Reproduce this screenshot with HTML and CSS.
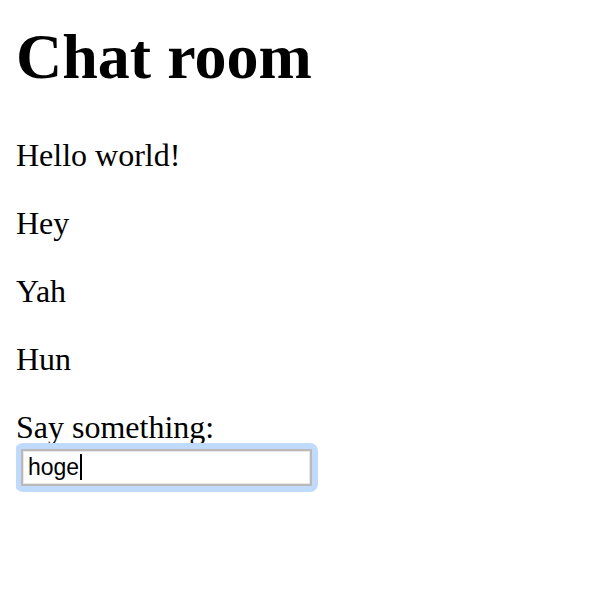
FILE: index.html
```html
<!DOCTYPE html>
<html>
<head>
<meta charset="utf-8">
<link rel="stylesheet" href="styles.css">
</head>
<body class="page">
<h1 class="title">Chat room</h1>
<p class="msg">Hello world!</p>
<p class="msg">Hey</p>
<p class="msg">Yah</p>
<p class="msg">Hun</p>
<div class="form">
  <div class="label">Say something:</div>
  <div class="ring"><div class="field"><span class="value">hoge</span><span class="caret"></span></div></div>
</div>
</body>
</html>
```

FILE: styles.css
```css
html, body { background: #fff; }
.page {
  margin: 20px 16px 16px 16px;
  font-family: "Liberation Serif", "Times New Roman", serif;
  color: #000;
}
.title {
  font-size: 64px;
  font-weight: bold;
  margin: 0 0 43px 0;
  line-height: 74px;
}
.msg {
  font-size: 32px;
  line-height: 37px;
  margin: 0 0 31px 0;
}
.form {
  font-size: 32px;
  line-height: 37px;
}
.label { height: 37px; }
.ring {
  display: inline-block;
  margin: -4px 0 0 -1px;
  padding: 6px;
  background: #bfdafb;
  border-radius: 8px;
}
.field {
  box-sizing: border-box;
  width: 291px;
  height: 37px;
  background: #fff;
  border: 2px solid #b9b9b9;
  box-shadow: inset 0 0 0 1px #e8e8e8;
  display: flex;
  align-items: center;
  padding-left: 5px;
  font-family: "Liberation Sans", Arial, sans-serif;
  font-size: 23px;
  line-height: 26px;
}
.caret {
  width: 2px;
  height: 26px;
  background: #000;
  margin-left: 1px;
}
```
